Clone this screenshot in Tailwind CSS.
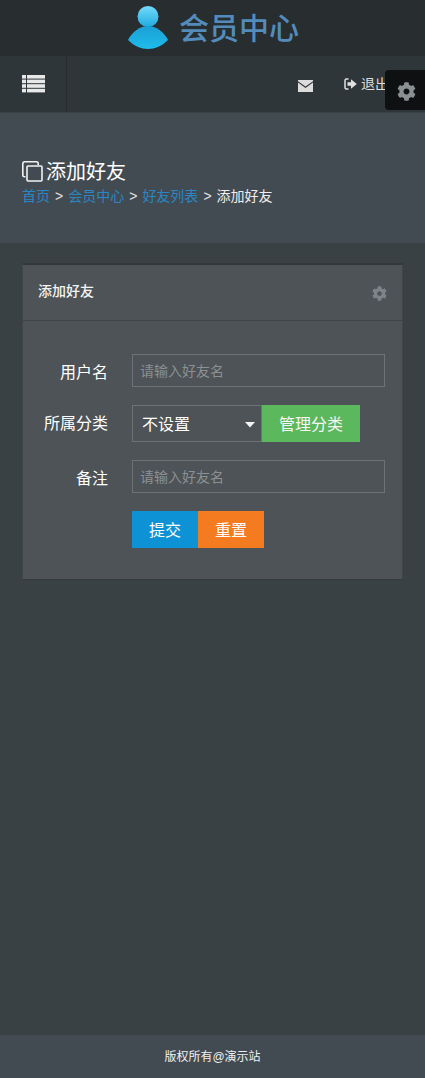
<!DOCTYPE html>
<html lang="zh-CN">
<head>
    <meta charset="UTF-8">
    <meta name="viewport" content="width=device-width, initial-scale=1.0">
    <title>添加好友 - 会员中心</title>
    <script src="https://cdn.jsdelivr.net/npm/@tailwindcss/browser@4"></script>
</head>
<body class="bg-[#3a4144] font-['Liberation_Sans','Noto_Sans_CJK_SC',sans-serif] text-white">
    <div class="relative min-h-screen flex flex-col overflow-hidden">
        <!-- Logo -->
        <div class="h-14 bg-[#282d30] flex items-center justify-center gap-[11px] pl-[2px]">
            <svg class="w-10 h-[44px]" viewBox="0 0 40 44">
                <defs>
                    <linearGradient id="head" x1="0" y1="0" x2="0" y2="1">
                        <stop offset="0" stop-color="#74dbfa"/>
                        <stop offset="1" stop-color="#1fabdf"/>
                    </linearGradient>
                    <linearGradient id="body" x1="0" y1="0" x2="0" y2="1">
                        <stop offset="0" stop-color="#1b9fd6"/>
                        <stop offset="1" stop-color="#1fbdea"/>
                    </linearGradient>
                </defs>
                <circle cx="20" cy="10.5" r="10.5" fill="url(#head)"/>
                <path d="M0 34C4 26 12 20 20 20S36 26 40 34C34 40 27 43 20 43S6 40 0 34Z" fill="url(#body)"/>
            </svg>
            <span class="text-[30px] font-medium leading-none text-[#538cba] mt-[2px]">会员中心</span>
        </div>

        <!-- Nav -->
        <div class="h-[57px] bg-[#2f3639] border-b border-[#3a4144] flex items-center">
            <div class="w-[67px] h-full border-r border-[#272c2e] flex items-center justify-center">
                <svg class="w-[23px] h-[18px]" viewBox="0 0 23 18" fill="#e8e8e8">
                    <rect y="0" width="4" height="3.6"/><rect x="5" y="0" width="18" height="3.6"/>
                    <rect y="4.6" width="4" height="3.6"/><rect x="5" y="4.6" width="18" height="3.6"/>
                    <rect y="9.2" width="4" height="3.6"/><rect x="5" y="9.2" width="18" height="3.6"/>
                    <rect y="13.8" width="4" height="3.6"/><rect x="5" y="13.8" width="18" height="3.6"/>
                </svg>
            </div>
            <div class="flex-1 flex items-center pl-[231px] text-sm text-[#dddddd] whitespace-nowrap">
                <svg class="w-[15px] h-[12px] mt-[3px]" viewBox="0 0 15 12">
                    <path d="M0 0H15V1.200L7.500 6.600 0 1.200Z" fill="#dcdcdc"/>
                    <path d="M0 2.600 7.500 8 15 2.600V12H0Z" fill="#dcdcdc"/>
                </svg>
                <svg class="w-[13px] h-[12px] ml-[31px]" viewBox="0 0 13 12">
                    <path d="M4.500 1H2.500C1.500 1 1 1.600 1 2.500v7C1 10.400 1.500 11 2.500 11h2" fill="none" stroke="#e0e0e0" stroke-width="1.500"/>
                    <path d="M3.500 4.200H7V1.200L12.800 6 7 10.800V7.800H3.500Z" fill="#e0e0e0"/>
                </svg>
                <span class="ml-[4px]">退出</span>
            </div>
        </div>

        <!-- Settings tab -->
        <div class="absolute left-[385px] top-[70px] w-10 h-10 bg-[#0e1011] rounded-l-[4px] flex items-center justify-center">
            <svg class="w-[19px] h-[19px] mt-[3px] ml-[2px]" viewBox="0 0 512 512" fill="#8a8f92">
                <path d="M487.4 315.7l-42.6-24.6c4.3-23.2 4.3-47 0-70.2l42.6-24.6c4.900-2.800 7.100-8.600 5.500-14-11.100-35.600-30-67.800-54.700-94.600-3.800-4.100-10-5.100-14.800-2.300L380.800 110c-17.900-15.400-38.500-27.300-60.800-35.100V25.800c0-5.600-3.900-10.500-9.400-11.700-36.700-8.200-74.300-7.800-109.200 0-5.500 1.200-9.400 6.100-9.400 11.700V75c-22.200 7.900-42.800 19.800-60.800 35.100L88.700 85.500c-4.900-2.800-11-1.900-14.800 2.300-24.700 26.700-43.600 58.900-54.700 94.600-1.700 5.400.6 11.200 5.500 14L67.300 221c-4.300 23.200-4.300 47 0 70.200l-42.600 24.600c-4.900 2.800-7.100 8.600-5.500 14 11.100 35.600 30 67.800 54.700 94.600 3.800 4.100 10 5.100 14.800 2.300l42.600-24.600c17.900 15.400 38.500 27.300 60.800 35.100v49.200c0 5.600 3.900 10.500 9.400 11.700 36.700 8.200 74.300 7.800 109.200 0 5.500-1.200 9.400-6.100 9.400-11.700v-49.200c22.200-7.900 42.800-19.800 60.800-35.100l42.600 24.600c4.900 2.800 11 1.900 14.800-2.300 24.700-26.700 43.600-58.900 54.700-94.600 1.500-5.500-.7-11.300-5.600-14.100zM256 336c-44.100 0-80-35.900-80-80s35.900-80 80-80 80 35.900 80 80-35.900 80-80 80z"/>
            </svg>
        </div>

        <!-- Page title -->
        <div class="h-[130px] bg-[#434b52] pl-[22px] pt-[45px]">
            <div class="flex items-center h-[26px]">
                <svg class="w-[21px] h-[21px] mr-[4px]" viewBox="0 0 21 21" fill="none" stroke="#f2f2f2" stroke-width="1.600">
                    <path d="M3.500 15.800H2.500C1.500 15.800 .8 15.100 .8 14.200V3C.8 1.800 1.600 .8 2.800 .8H14.500C15.500 .8 16.200 1.500 16.200 2.500V4"/>
                    <rect x="5" y="5" width="15" height="15" rx="1"/>
                </svg>
                <h1 class="text-xl leading-none mt-[2px] ml-[-1px]">添加好友</h1>
            </div>
            <div class="flex items-center h-[24px] text-sm whitespace-nowrap">
                <a class="text-[#2a87c4]">首页</a>
                <span class="mx-[5px] text-[#e4e4e4]">&gt;</span>
                <a class="text-[#2a87c4]">会员中心</a>
                <span class="mx-[5px] text-[#e4e4e4]">&gt;</span>
                <a class="text-[#2a87c4]">好友列表</a>
                <span class="mx-[5px] text-[#e4e4e4]">&gt;</span>
                <span class="text-[#eeeeee]">添加好友</span>
            </div>
        </div>

        <!-- Content -->
        <div class="flex-1 px-[22px] pt-5">
            <div class="w-[381px] h-[317px] bg-[#4d5356] border border-[#3f4649] border-t-2 border-t-[#32383b] border-b-[#33393c]">
                <div class="h-14 border-b border-[#3e4548] flex items-center justify-between pl-[15px] pr-[15px]">
                    <span class="text-sm font-medium text-[#f4f4f4] mb-[4px]">添加好友</span>
                    <svg class="w-[15px] h-[15px] mt-[2px]" viewBox="0 0 512 512" fill="#7c848a">
                        <path d="M487.4 315.7l-42.6-24.6c4.3-23.2 4.3-47 0-70.2l42.6-24.6c4.900-2.800 7.100-8.600 5.500-14-11.100-35.600-30-67.800-54.700-94.600-3.800-4.100-10-5.100-14.800-2.300L380.800 110c-17.900-15.400-38.500-27.300-60.800-35.100V25.800c0-5.600-3.900-10.500-9.400-11.700-36.700-8.200-74.300-7.800-109.200 0-5.500 1.200-9.400 6.100-9.400 11.700V75c-22.200 7.900-42.800 19.800-60.800 35.100L88.700 85.500c-4.900-2.800-11-1.900-14.800 2.300-24.700 26.700-43.600 58.900-54.700 94.600-1.700 5.400.6 11.200 5.500 14L67.300 221c-4.300 23.200-4.300 47 0 70.200l-42.600 24.600c-4.900 2.800-7.100 8.600-5.500 14 11.100 35.600 30 67.800 54.700 94.600 3.800 4.100 10 5.100 14.800 2.300l42.600-24.600c17.900 15.400 38.500 27.300 60.800 35.100v49.200c0 5.600 3.900 10.500 9.400 11.700 36.700 8.200 74.300 7.800 109.200 0 5.500-1.200 9.400-6.100 9.400-11.700v-49.200c22.200-7.900 42.800-19.800 60.800-35.100l42.600 24.600c4.900 2.800 11 1.900 14.800-2.300 24.700-26.700 43.600-58.900 54.700-94.600 1.500-5.500-.7-11.300-5.600-14.100zM256 336c-44.100 0-80-35.900-80-80s35.900-80 80-80 80 35.900 80 80-35.900 80-80 80z"/>
                    </svg>
                </div>
                <form class="pt-[33px] pl-[21px] flex flex-col">
                    <div class="flex items-center h-[33px]">
                        <label class="w-[64px] text-right text-base mr-6 whitespace-nowrap mt-[4px]">用户名</label>
                        <input class="w-[253px] h-[33px] border border-[#6c7275] bg-transparent px-[7px] text-sm outline-none placeholder:text-[#8b9092]" placeholder="请输入好友名">
                    </div>
                    <div class="flex items-center h-[37px] mt-[18px]">
                        <label class="w-[64px] text-right text-base mr-6 whitespace-nowrap flex justify-end">所属分类</label>
                        <div class="relative w-[130px] h-[37px]">
                            <select class="appearance-none w-full h-full border border-[#6c7275] bg-transparent pl-[9px] pt-[2px] text-base outline-none">
                                <option>不设置</option>
                            </select>
                            <svg class="absolute right-[7px] top-[17px] w-[10px] h-[6px] pointer-events-none" viewBox="0 0 10 6"><path d="M0 0h10L5 5.500Z" fill="#f4f4f4"/></svg>
                        </div>
                        <button type="button" class="w-[98px] h-[37px] pt-[2px] bg-[#5cb85c] text-base text-[#f6f6f6]">管理分类</button>
                    </div>
                    <div class="flex items-center h-[33px] mt-[18px]">
                        <label class="w-[64px] text-right text-base mr-6 whitespace-nowrap mt-[5px]">备注</label>
                        <input class="w-[253px] h-[33px] border border-[#6c7275] bg-transparent px-[7px] text-sm outline-none placeholder:text-[#8b9092]" placeholder="请输入好友名">
                    </div>
                    <div class="flex mt-[18px] pl-[88px]">
                        <button type="button" class="w-[66px] h-[37px] pt-[2px] bg-[#0e92d6] text-base">提交</button>
                        <button type="button" class="w-[66px] h-[37px] pt-[2px] bg-[#f47b20] text-base">重置</button>
                    </div>
                </form>
            </div>
        </div>

        <!-- Footer -->
        <div class="h-[43px] bg-[#434b52] flex items-center justify-center text-xs text-[#f0f0f0]">版权所有@演示站</div>
    </div>
</body>
</html>
